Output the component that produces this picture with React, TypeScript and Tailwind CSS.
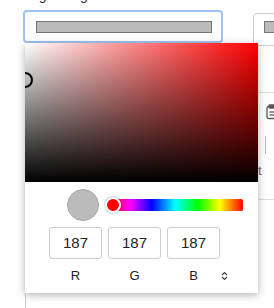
import React from "react";

function Clipboard() {
  return (
    <svg width="10" height="16" viewBox="0 0 10 16" fill="none" stroke="#555" strokeWidth="1.3">
      <rect x="1" y="2.5" width="12" height="12" rx="1.5" />
      <rect x="3" y="1" width="6" height="3" rx="0.8" fill="#555" />
      <line x1="3.5" y1="8" x2="10" y2="8" />
      <line x1="3.5" y1="11" x2="10" y2="11" />
    </svg>
  );
}

function UpDown() {
  return (
    <svg width="7" height="10" viewBox="0 0 7 10" fill="none" stroke="#444" strokeWidth="1.2">
      <polyline points="1,4 3.5,1.5 6,4" />
      <polyline points="1,6 3.5,8.5 6,6" />
    </svg>
  );
}

export default function App() {
  const vals = ["187", "187", "187"];
  const labels = ["R", "G", "B"];
  return (
    <div
      className="relative w-[274px] h-[308px] overflow-hidden bg-white text-[#222]"
      style={{ fontFamily: '"Liberation Sans", Arial, sans-serif' }}
    >
      {/* underlying page */}
      <div className="h-[4px] overflow-hidden flow-root">
        <div className="mt-[-13px] pl-[24px] text-[14px] leading-[16px] text-[#333] whitespace-nowrap">
          Tag background
        </div>
      </div>
      <div className="flex items-start pl-[23px] mt-[6px]">
        <div className="w-[200px] h-[33px] border-2 border-[#9fc3f5] rounded-[4px] pl-[11px] pt-[9px] shrink-0">
          <div className="w-[176px] h-[12px] bg-[#bbbbbb] border border-[#777]" />
        </div>
        <div className="ml-[30px] mt-[3px] w-[60px] h-[33px] border border-[#ccc] rounded-[4px] pl-[10px] pt-[7px] shrink-0">
          <div className="w-[60px] h-[12px] bg-[#bbbbbb] border border-[#777]" />
        </div>
      </div>
      <div className="ml-[200px] mt-[46px] h-[108px] border-t border-b border-[#ddd] relative">
        <div className="absolute left-[66px] top-[11px]">
          <Clipboard />
        </div>
        <div className="absolute left-[65px] top-[43px] w-px h-[18px] bg-[#bbb]" />
        <div className="absolute left-[58px] top-[70px] text-[13px] leading-[16px] text-[#666]">t</div>
      </div>
      <div className="ml-[25px] mt-[93px] h-[20px] border-l border-[#ccc]" />

      {/* color picker popup */}
      <div className="absolute left-[25px] top-[43px] w-[233px] h-[250px] bg-white shadow-[0_2px_8px_rgba(0,0,0,0.3)] flex flex-col">
        <div className="relative h-[139px] overflow-hidden bg-[linear-gradient(to_top,#000,transparent),linear-gradient(to_right,#fff,#f00)]">
          <div className="absolute left-[-8px] top-[29px] w-[16px] h-[16px] rounded-full border-2 border-black" />
        </div>
        <div className="flex items-center mt-[7px] pl-[42px]">
          <div className="w-[32px] h-[32px] rounded-full bg-[#bbbbbb] border border-[#a8a8a8]" />
          <div className="relative ml-[8px] w-[136px] h-[12px] rounded-[2px] bg-[linear-gradient(to_right,#f00_0%,#f0f_17%,#00f_33%,#0ff_50%,#0f0_67%,#ff0_83%,#f00_100%)]">
            <div className="absolute left-[-2px] top-[-2px] w-[16px] h-[16px] rounded-full bg-[#f00] border-2 border-white shadow-[0_0_2px_rgba(0,0,0,0.5)]" />
          </div>
        </div>
        <div className="flex gap-[6px] pl-[24px] mt-[6px]">
          {vals.map((v, i) => (
            <div
              key={i}
              className="w-[53px] h-[32px] border border-[#ccc] rounded-[3px] flex items-center justify-center text-[15px] text-[#222]"
            >
              {v}
            </div>
          ))}
        </div>
        <div className="flex gap-[6px] pl-[24px] mt-[9px] items-center">
          {labels.map((l) => (
            <div key={l} className="w-[53px] text-center text-[13px] leading-[16px] text-[#222]">
              {l}
            </div>
          ))}
          <div className="ml-[-5px] flex items-center">
            <UpDown />
          </div>
        </div>
      </div>
    </div>
  );
}
